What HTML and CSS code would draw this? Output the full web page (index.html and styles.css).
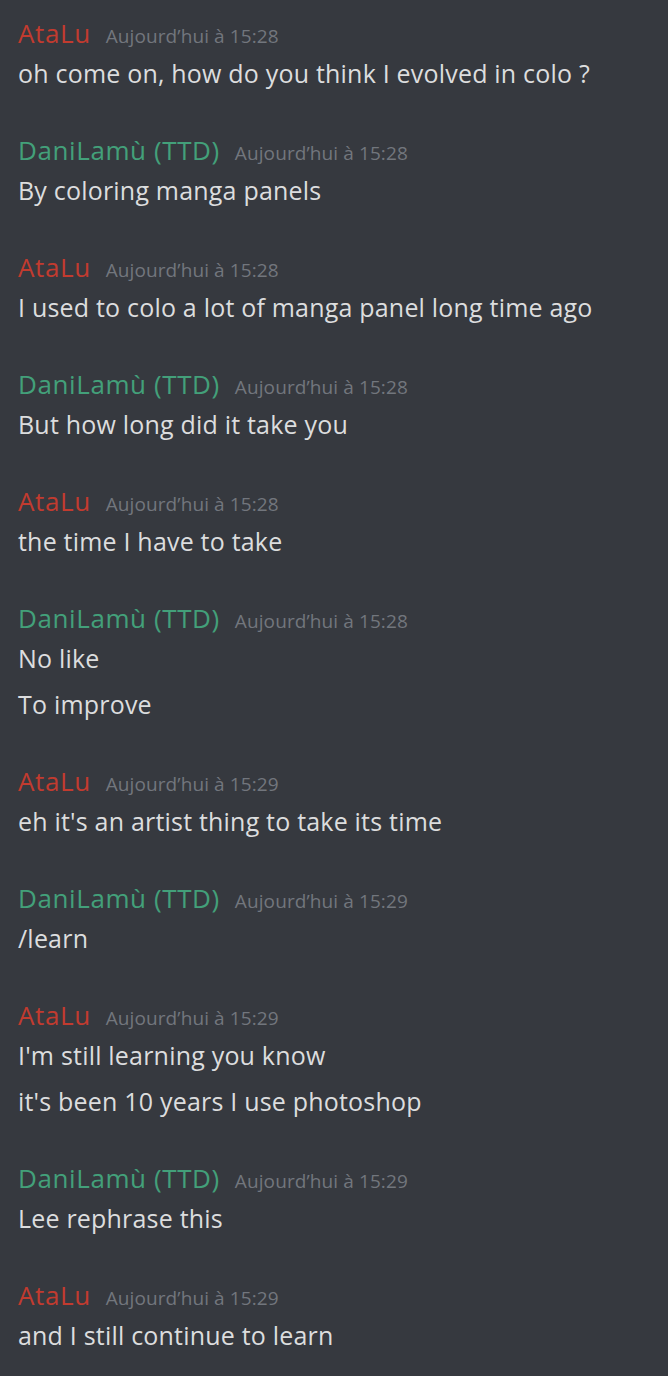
FILE: index.html
```html
<!DOCTYPE html>
<html lang="fr">
<head>
<meta charset="utf-8">
<link rel="stylesheet" href="styles.css">
</head>
<body>
<div class="chat">
  <div class="group">
    <div class="head"><span class="name red">AtaLu</span><span class="time">Aujourd’hui à 15:28</span></div>
    <div class="msg">oh come on, how do you think I evolved in colo ?</div>
  </div>
  <div class="group">
    <div class="head"><span class="name green">DaniLamù (TTD)</span><span class="time">Aujourd’hui à 15:28</span></div>
    <div class="msg">By coloring manga panels</div>
  </div>
  <div class="group">
    <div class="head"><span class="name red">AtaLu</span><span class="time">Aujourd’hui à 15:28</span></div>
    <div class="msg">I used to colo a lot of manga panel long time ago</div>
  </div>
  <div class="group">
    <div class="head"><span class="name green">DaniLamù (TTD)</span><span class="time">Aujourd’hui à 15:28</span></div>
    <div class="msg">But how long did it take you</div>
  </div>
  <div class="group">
    <div class="head"><span class="name red">AtaLu</span><span class="time">Aujourd’hui à 15:28</span></div>
    <div class="msg">the time I have to take</div>
  </div>
  <div class="group">
    <div class="head"><span class="name green">DaniLamù (TTD)</span><span class="time">Aujourd’hui à 15:28</span></div>
    <div class="msg">No like</div>
    <div class="msg">To improve</div>
  </div>
  <div class="group">
    <div class="head"><span class="name red">AtaLu</span><span class="time">Aujourd’hui à 15:29</span></div>
    <div class="msg">eh it's an artist thing to take its time</div>
  </div>
  <div class="group">
    <div class="head"><span class="name green">DaniLamù (TTD)</span><span class="time">Aujourd’hui à 15:29</span></div>
    <div class="msg">/learn</div>
  </div>
  <div class="group">
    <div class="head"><span class="name red">AtaLu</span><span class="time">Aujourd’hui à 15:29</span></div>
    <div class="msg">I'm still learning you know</div>
    <div class="msg">it's been 10 years I use photoshop</div>
  </div>
  <div class="group">
    <div class="head"><span class="name green">DaniLamù (TTD)</span><span class="time">Aujourd’hui à 15:29</span></div>
    <div class="msg">Lee rephrase this</div>
  </div>
  <div class="group">
    <div class="head"><span class="name red">AtaLu</span><span class="time">Aujourd’hui à 15:29</span></div>
    <div class="msg">and I still continue to learn</div>
  </div>
</div>
</body>
</html>
```
FILE: styles.css
```css
html, body {
  margin: 0;
  padding: 0;
  background: #36393f;
}
body {
  font-family: "Open Sans", "Noto Sans", sans-serif;
  width: 668px;
  height: 1376px;
  overflow: hidden;
}
.chat {
  display: flex;
  flex-direction: column;
  gap: 38px;
  padding: 17px 18px 0;
}
.head {
  display: flex;
  align-items: baseline;
  height: 33px;
  line-height: 33px;
}
.name {
  font-size: 26px;
  font-weight: 400;
  letter-spacing: 0.6px;
}
.red { color: #c23b2f; }
.green { color: #43a07a; }
.time {
  margin-left: 15px;
  font-size: 19px;
  letter-spacing: 0.1px;
  color: #72767d;
}
.msg {
  font-size: 25px;
  letter-spacing: 0.2px;
  line-height: 46px;
  color: #dcddde;
}
```
